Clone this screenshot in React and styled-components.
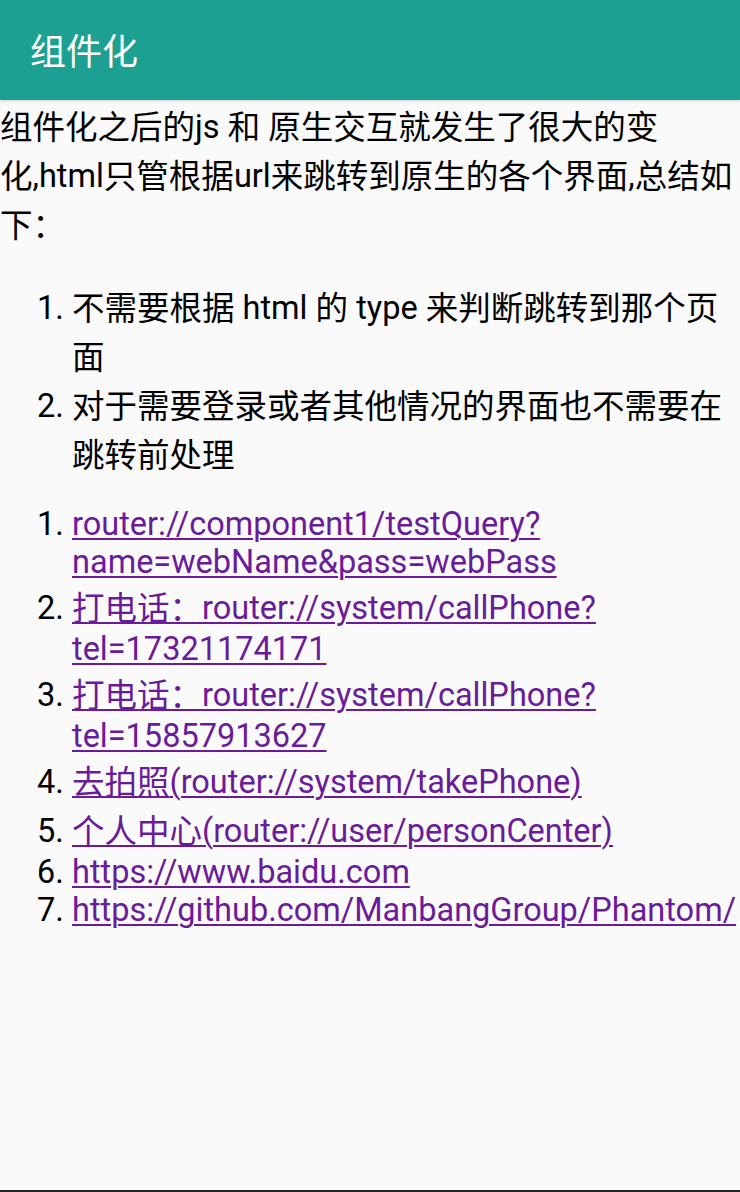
import React from 'react';
import styled, { createGlobalStyle } from 'styled-components';

const GlobalStyle = createGlobalStyle`
  html, body {
    margin: 0;
    padding: 0;
    background: #fafafa;
  }
  body {
    font-family: Roboto, "Noto Sans CJK SC", sans-serif;
    color: #000;
  }
`

const Screen = styled.div`
  display: flex;
  flex-direction: column;
  width: 740px;
  height: 1192px;
  box-sizing: border-box;
  border-bottom: 2px solid #222;
  background: #fafafa;
  overflow: hidden;
`

const Toolbar = styled.header`
  display: flex;
  align-items: center;
  height: 100px;
  flex-shrink: 0;
  padding: 0 30px;
  background: #1ca091;
  box-shadow: 0 1px 3px rgba(0, 0, 0, 0.18);
`

const Title = styled.h1`
  margin: 0 0 3px;
  font-family: Roboto, "Noto Sans CJK SC", sans-serif;
  font-size: 36px;
  font-weight: 400;
  color: #fff;
`

const WebContent = styled.main`
  font-size: 32.5px;
  line-height: normal;
`

const Intro = styled.div``

const List = styled.ol`
  margin: ${props => props.$top}px 0 0;
  padding-left: 72px;
`

const Item = styled.li``

const Link = styled.a`
  color: #6a1b9a;
  text-decoration: underline;
  text-decoration-thickness: 2px;
  text-underline-offset: 3px;
`

// the webview's CJK font sits a little taller than Roboto,
// so han runs get their own box; latin-only lines stay short
const Han = styled.span`
  font-family: "Noto Sans CJK SC", sans-serif;
  line-height: 49px;
  vertical-align: -1px;
`

const HAN = /([\u3000-\u303f\u3400-\u9fff\uff00-\uffef]+)/

const withHan = text =>
  text.split(HAN).map((part, i) => (i % 2 ? <Han key={i}>{part}</Han> : part))

const intro = '组件化之后的js 和 原生交互就发生了很大的变化,html只管根据url来跳转到原生的各个界面,总结如下：'

const notes = [
  '不需要根据 html 的 type 来判断跳转到那个页面',
  '对于需要登录或者其他情况的界面也不需要在跳转前处理',
]

const links = [
  'router://component1/testQuery?name=webName&pass=webPass',
  '打电话：router://system/callPhone?tel=17321174171',
  '打电话：router://system/callPhone?tel=15857913627',
  '去拍照(router://system/takePhone)',
  '个人中心(router://user/personCenter)',
  'https://www.baidu.com',
  'https://github.com/ManbangGroup/Phantom/',
]

export default function App() {
  return (
    <>
      <GlobalStyle />
      <Screen>
        <Toolbar>
          <Title>组件化</Title>
        </Toolbar>
        <WebContent>
          <Intro>{withHan(intro)}</Intro>
          <List $top={34}>
            {notes.map(n => <Item key={n}>{withHan(n)}</Item>)}
          </List>
          <List $top={28}>
            {links.map(l => (
              <Item key={l}>
                <Link href="#">{withHan(l)}</Link>
              </Item>
            ))}
          </List>
        </WebContent>
      </Screen>
    </>
  );
}
